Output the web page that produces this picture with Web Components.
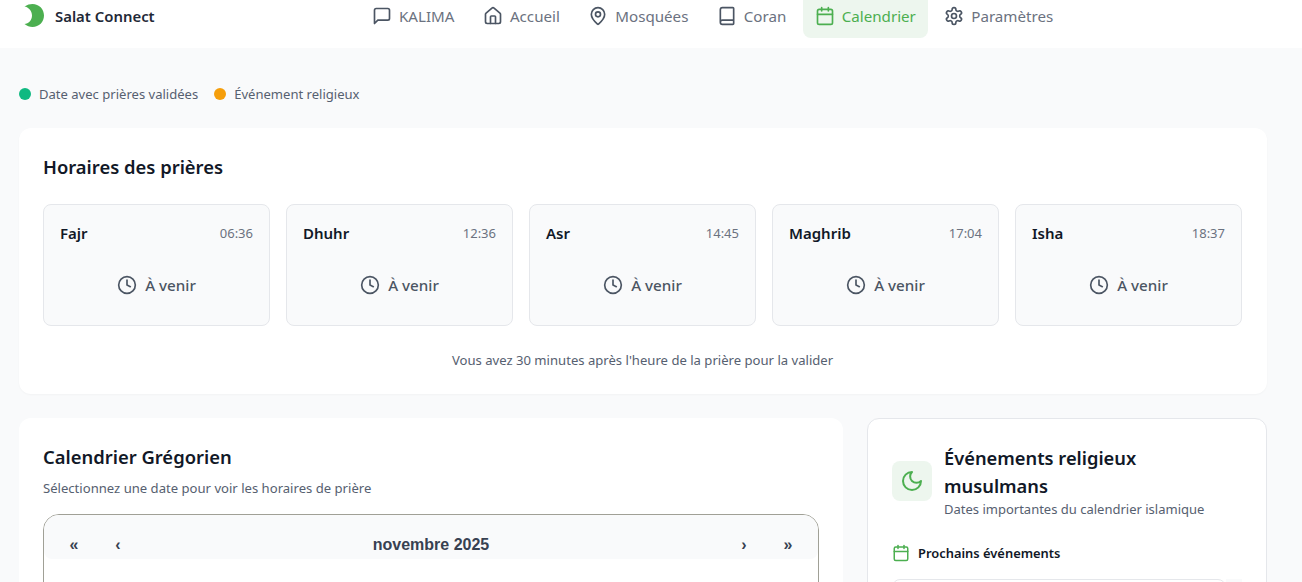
<!DOCTYPE html>
<html lang="fr">
<head>
<meta charset="utf-8">
<title>Salat Connect</title>
<style>
  html, body { margin: 0; height: 582px; overflow: hidden; background: #f9fafb; }
  body { font-family: "Noto Sans", sans-serif; color: #111827; }
</style>
</head>
<body>
<app-header></app-header>
<app-main>
  <prayer-legend></prayer-legend>
  <prayer-times></prayer-times>
  <lower-row>
    <gregorian-calendar></gregorian-calendar>
    <events-panel></events-panel>
  </lower-row>
</app-main>

<script>
"use strict";
(() => {
  const icons = {
    message: `<path d="M21 15a2 2 0 0 1-2 2H7l-4 4V5a2 2 0 0 1 2-2h14a2 2 0 0 1 2 2z"/>`,
    house: `<path d="M15 21v-8a1 1 0 0 0-1-1h-4a1 1 0 0 0-1 1v8"/><path d="M3 10a2 2 0 0 1 .709-1.528l7-6a2 2 0 0 1 2.582 0l7 6A2 2 0 0 1 21 10v9a2 2 0 0 1-2 2H5a2 2 0 0 1-2-2z"/>`,
    pin: `<path d="M20 10c0 4.993-5.539 10.193-7.399 11.799a1 1 0 0 1-1.202 0C9.539 20.193 4 14.993 4 10a8 8 0 0 1 16 0"/><circle cx="12" cy="10" r="3"/>`,
    book: `<path d="M4 19.5v-15A2.5 2.5 0 0 1 6.5 2H19a1 1 0 0 1 1 1v18a1 1 0 0 1-1 1H6.5a1 1 0 0 1 0-5H20"/>`,
    calendar: `<path d="M8 2v4"/><path d="M16 2v4"/><rect width="18" height="18" x="3" y="4" rx="2"/><path d="M3 10h18"/>`,
    gear: `<path d="M12.22 2h-.44a2 2 0 0 0-2 2v.18a2 2 0 0 1-1 1.73l-.43.25a2 2 0 0 1-2 0l-.15-.08a2 2 0 0 0-2.73.73l-.22.38a2 2 0 0 0 .73 2.73l.15.1a2 2 0 0 1 1 1.72v.51a2 2 0 0 1-1 1.74l-.15.09a2 2 0 0 0-.73 2.73l.22.38a2 2 0 0 0 2.73.73l.15-.08a2 2 0 0 1 2 0l.43.25a2 2 0 0 1 1 1.73V20a2 2 0 0 0 2 2h.44a2 2 0 0 0 2-2v-.18a2 2 0 0 1 1-1.73l.43-.25a2 2 0 0 1 2 0l.15.08a2 2 0 0 0 2.73-.73l.22-.39a2 2 0 0 0-.73-2.73l-.15-.08a2 2 0 0 1-1-1.74v-.5a2 2 0 0 1 1-1.74l.15-.09a2 2 0 0 0 .73-2.73l-.22-.38a2 2 0 0 0-2.73-.73l-.15.08a2 2 0 0 1-2 0l-.43-.25a2 2 0 0 1-1-1.73V4a2 2 0 0 0-2-2z"/><circle cx="12" cy="12" r="3"/>`,
    clock: `<circle cx="12" cy="12" r="10"/><polyline points="12 6 12 12 16 14"/>`,
    moon: `<path d="M12 3a6 6 0 0 0 9 9 9 9 0 1 1-9-9Z"/>`
  };

  customElements.define("app-icon", class extends HTMLElement {
    connectedCallback() {
      const size = this.getAttribute("size") || 20;
      this.attachShadow({mode: "open"}).innerHTML = `
        <style>
          :host { display: inline-flex; flex: none; }
        </style>
        <svg width="${size}" height="${size}" viewBox="0 0 24 24" fill="none" stroke="currentColor"
             stroke-width="2" stroke-linecap="round" stroke-linejoin="round">${icons[this.getAttribute("name")]}</svg>
      `;
    }
  });

  customElements.define("nav-item", class extends HTMLElement {
    connectedCallback() {
      this.attachShadow({mode: "open"}).innerHTML = `
        <style>
          :host {
            display: flex;
            align-items: center;
            gap: 7px;
            height: 33px;
            padding: 9px 12px 6px;
            border-radius: 0 0 8px 8px;
            color: #6b7280;
            font-size: 15.15px;
          }
          :host([active]) { background: #edf6ee; color: #4caf50; }
          app-icon { color: #4b5563; }
          :host([active]) app-icon { color: #4caf50; }
        </style>
        <app-icon name="${this.getAttribute("icon")}"></app-icon><slot></slot>
      `;
    }
  });

  customElements.define("app-header", class extends HTMLElement {
    constructor() {
      super();
      this.attachShadow({mode: "open"}).innerHTML = `
        <style>
          :host {
            display: flex;
            height: 48px;
            background: #fff;
            overflow: hidden;
          }
          #logo {
            display: flex;
            align-items: center;
            gap: 9px;
            width: 338px;
            height: 32px;
            margin-left: 22px;
            font-size: 14.9px;
            font-weight: 600;
            color: #1f2937;
          }
          nav { display: flex; gap: 4.4px; height: 48px; margin-top: -10px; }
        </style>
        <div id="logo">
          <svg width="24" height="24" viewBox="0 0 24 24">
            <path fill="#4caf50" d="M2.5 2.5C5 .8 8 0 10.5 0 17 0 22 5 22 11.5S17 23 10.5 23C7.5 23 5 22 2.5 20 6.5 20 10 16 10 11.5S6.5 3 2.5 2.5Z"/>
          </svg>
          <span>Salat Connect</span>
        </div>
        <nav>
          <nav-item icon="message">KALIMA</nav-item>
          <nav-item icon="house">Accueil</nav-item>
          <nav-item icon="pin">Mosquées</nav-item>
          <nav-item icon="book">Coran</nav-item>
          <nav-item icon="calendar" active>Calendrier</nav-item>
          <nav-item icon="gear">Paramètres</nav-item>
        </nav>
      `;
    }
  });

  customElements.define("app-main", class extends HTMLElement {
    constructor() {
      super();
      this.attachShadow({mode: "open"}).innerHTML = `
        <style>
          :host {
            display: flex;
            flex-direction: column;
            width: 1248px;
            margin-left: 19px;
            padding-top: 36px;
          }
        </style>
        <slot></slot>
      `;
    }
  });

  customElements.define("prayer-legend", class extends HTMLElement {
    constructor() {
      super();
      this.attachShadow({mode: "open"}).innerHTML = `
        <style>
          :host {
            display: flex;
            align-items: center;
            gap: 16px;
            height: 20px;
            margin-bottom: 24px;
            font-size: 13.05px;
            color: #566070;
          }
          div { display: flex; align-items: center; gap: 8px; }
          i { width: 12px; height: 12px; border-radius: 50%; }
        </style>
        <div><i style="background:#10b981"></i>Date avec prières validées</div>
        <div><i style="background:#f59e0b"></i>Événement religieux</div>
      `;
    }
  });

  customElements.define("prayer-card", class extends HTMLElement {
    connectedCallback() {
      this.attachShadow({mode: "open"}).innerHTML = `
        <style>
          :host {
            display: flex;
            flex-direction: column;
            box-sizing: border-box;
            height: 122px;
            padding: 16px;
            background: #f9fafb;
            border: 1px solid #e5e7eb;
            border-radius: 8px;
          }
          #top { display: flex; justify-content: space-between; align-items: center; height: 24px; }
          b { font-size: 15px; font-weight: 600; color: #111827; }
          #time { font-size: 13px; color: #6b7280; }
          #state {
            display: flex;
            justify-content: center;
            align-items: center;
            gap: 8px;
            margin-top: 28px;
            height: 24px;
            font-size: 15.2px;
            font-weight: 500;
            color: #4b5563;
          }
        </style>
        <div id="top"><b>${this.getAttribute("name")}</b><span id="time">${this.getAttribute("time")}</span></div>
        <div id="state"><app-icon name="clock"></app-icon>À venir</div>
      `;
    }
  });

  customElements.define("prayer-times", class extends HTMLElement {
    constructor() {
      super();
      this.attachShadow({mode: "open"}).innerHTML = `
        <style>
          :host {
            display: block;
            box-sizing: border-box;
            height: 266px;
            padding: 24px 25px 24px 24px;
            background: #fff;
            border-radius: 12px;
            box-shadow: 0 1px 2px rgba(0, 0, 0, 0.03);
            margin-bottom: 24px;
          }
          h2 { margin: 0 0 22px; font-size: 18.4px; line-height: 30px; font-weight: 600; color: #111827; }
          #grid { display: grid; grid-template-columns: repeat(5, 1fr); gap: 16px; }
          p { margin: 24px 0 0; text-align: center; font-size: 13.1px; line-height: 20px; color: #566070; }
        </style>
        <h2>Horaires des prières</h2>
        <div id="grid">
          <prayer-card name="Fajr" time="06:36"></prayer-card>
          <prayer-card name="Dhuhr" time="12:36"></prayer-card>
          <prayer-card name="Asr" time="14:45"></prayer-card>
          <prayer-card name="Maghrib" time="17:04"></prayer-card>
          <prayer-card name="Isha" time="18:37"></prayer-card>
        </div>
        <p>Vous avez 30 minutes après l'heure de la prière pour la valider</p>
      `;
    }
  });

  customElements.define("lower-row", class extends HTMLElement {
    constructor() {
      super();
      this.attachShadow({mode: "open"}).innerHTML = `
        <style>
          :host { display: grid; grid-template-columns: 824px 400px; gap: 24px; align-items: start; }
        </style>
        <slot></slot>
      `;
    }
  });

  customElements.define("gregorian-calendar", class extends HTMLElement {
    constructor() {
      super();
      this.attachShadow({mode: "open"}).innerHTML = `
        <style>
          :host {
            display: block;
            box-sizing: border-box;
            height: 400px;
            padding: 24px;
            background: #fff;
            border-radius: 12px;
          }
          h2 { margin: 0; font-size: 18.4px; line-height: 30px; font-weight: 600; color: #111827; }
          p { margin: 6px 0 16px; font-size: 13.1px; line-height: 20px; color: #566070; }
          #cal { height: 300px; border: 1px solid #a0a096; border-radius: 16px; background: #fff; }
          #nav {
            display: flex;
            align-items: center;
            box-sizing: border-box;
            height: 44px;
            padding: 16px 8px 0;
            background: #f9fafb;
            border-radius: 15px 15px 8px 8px;
            font: bold 16px "Liberation Sans", Arial, sans-serif;
            color: #374151;
          }
          #nav span { width: 44px; text-align: center; flex: none; }
          #nav #label { flex: 1; }
        </style>
        <h2>Calendrier Grégorien</h2>
        <p>Sélectionnez une date pour voir les horaires de prière</p>
        <div id="cal">
          <div id="nav">
            <span>«</span><span>‹</span><span id="label">novembre 2025</span><span>›</span><span>»</span>
          </div>
        </div>
      `;
    }
  });

  customElements.define("events-panel", class extends HTMLElement {
    constructor() {
      super();
      this.attachShadow({mode: "open"}).innerHTML = `
        <style>
          :host {
            display: block;
            box-sizing: border-box;
            height: 400px;
            padding: 25px 24px 24px;
            background: #fff;
            border: 1px solid #e5e7eb;
            border-radius: 12px;
          }
          #head { display: flex; align-items: center; gap: 12px; }
          #badge {
            display: flex;
            align-items: center;
            justify-content: center;
            width: 40px;
            height: 40px;
            flex: none;
            border-radius: 8px;
            background: #edf6ee;
            color: #4caf50;
          }
          h2 { margin: 0; font-size: 18.3px; line-height: 28px; font-weight: 600; color: #111827; }
          #sub { font-size: 13px; line-height: 18px; color: #566070; }
          #title {
            display: flex;
            align-items: center;
            gap: 8px;
            height: 18px;
            margin-top: 26px;
            font-size: 12.9px;
            font-weight: 600;
            color: #111827;
          }
          #title app-icon { color: #4caf50; }
          #list { display: flex; margin-top: 17px; }
          #event { width: 333px; height: 80px; border: 1px solid #e5e7eb; border-radius: 8px; background: #fff; }
          #track { width: 16px; height: 80px; background: #f9fafb; }
        </style>
        <div id="head">
          <div id="badge"><app-icon name="moon" size="24"></app-icon></div>
          <div>
            <h2>Événements religieux musulmans</h2>
            <div id="sub">Dates importantes du calendrier islamique</div>
          </div>
        </div>
        <div id="title"><app-icon name="calendar" size="18"></app-icon>Prochains événements</div>
        <div id="list"><div id="event"></div><div id="track"></div></div>
      `;
    }
  });
})();
</script>
</body>
</html>
